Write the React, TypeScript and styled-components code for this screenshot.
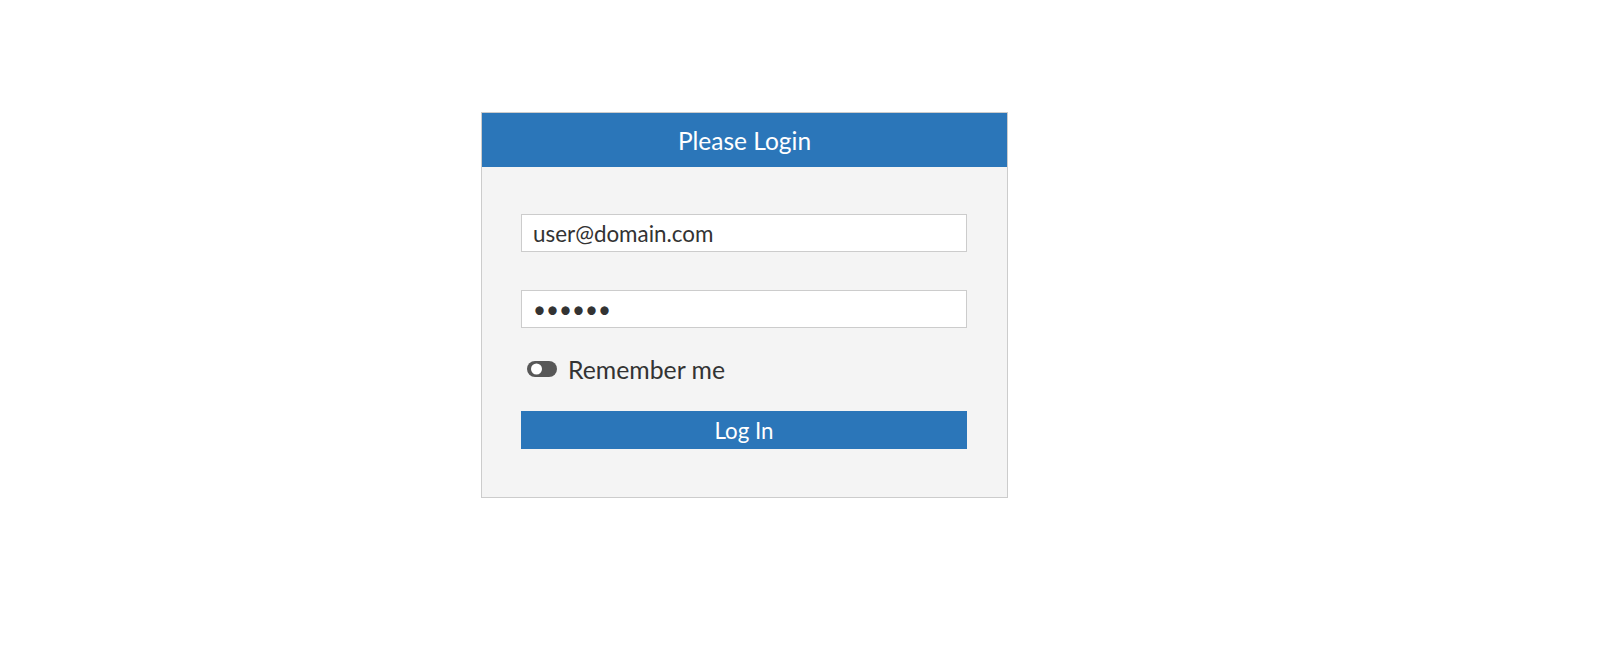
import React from "react";
import styled, { createGlobalStyle } from "styled-components";

const Global = createGlobalStyle`
  html, body { margin: 0; padding: 0; background: #ffffff; }
  body { font-family: Lato, "Open Sans", "Liberation Sans", sans-serif; color: #333333; }
  * { box-sizing: border-box; }
`;

const Page = styled.div`
  padding-top: 112px;
  padding-left: 481px;
`;

const Card = styled.div`
  width: 527px;
  border: 1px solid #cccccc;
  background: #f4f4f4;
`;

const Header = styled.div`
  height: 54px;
  background: #2b76b9;
  color: #ffffff;
  font-size: 24.5px;
  display: flex;
  align-items: center;
  justify-content: center;
`;

const Form = styled.form`
  display: flex;
  flex-direction: column;
  padding: 47px 40px 48px 39px;
`;

const Input = styled.input<{ $mt?: number }>`
  height: 38px;
  width: 100%;
  margin-top: ${(p) => p.$mt ?? 0}px;
  border: 1px solid #cccccc;
  background: #ffffff;
  padding: 0 11px;
  font-family: Lato, "Open Sans", "Liberation Sans", sans-serif;
  font-size: 22.4px;
  color: #333333;
  outline: none;
`;

const Row = styled.label`
  display: flex;
  align-items: center;
  gap: 11px;
  height: 28px;
  margin-top: 27px;
  padding-left: 6px;
  font-size: 24.8px;
  color: #333333;
`;

const Button = styled.button`
  margin-top: 28px;
  height: 38px;
  width: 100%;
  border: none;
  background: #2b76b9;
  color: #ffffff;
  font-family: Lato, "Open Sans", "Liberation Sans", sans-serif;
  font-size: 22.3px;
  padding: 0;
  cursor: pointer;
`;

const ToggleIcon = styled.svg`
  flex: none;
  margin-top: -1px;
`;

const Toggle = () => (
  <ToggleIcon width="30" height="16" viewBox="0 0 30 16" aria-hidden="true">
    <rect x="0" y="0" width="30" height="16" rx="8" fill="#575757" />
    <circle cx="9.5" cy="8" r="5.5" fill="#ffffff" />
  </ToggleIcon>
);

export default function App() {
  return (
    <>
      <Global />
      <Page>
        <Card>
          <Header>Please Login</Header>
          <Form onSubmit={(e) => e.preventDefault()}>
            <Input type="text" defaultValue="user@domain.com" />
            <Input type="password" defaultValue="secret" $mt={38} />
            <Row>
              <Toggle />
              Remember me
            </Row>
            <Button type="submit">Log In</Button>
          </Form>
        </Card>
      </Page>
    </>
  );
}
